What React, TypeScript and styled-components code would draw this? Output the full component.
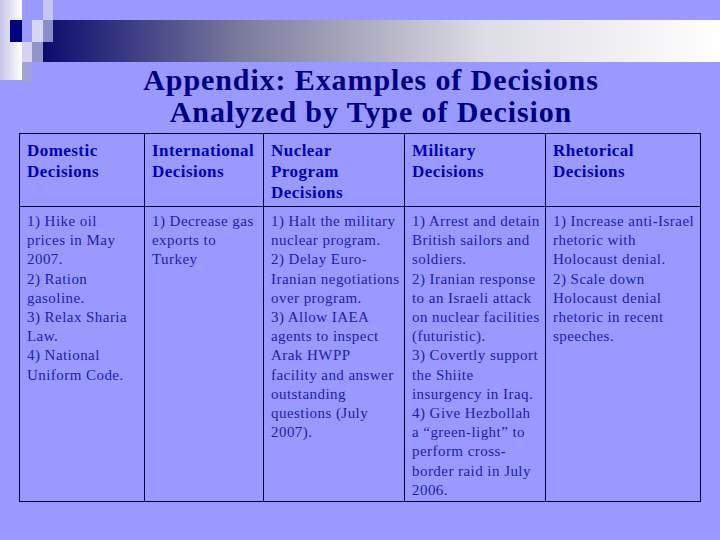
import styled, { createGlobalStyle } from "styled-components";

const GlobalStyle = createGlobalStyle`
  html, body {
    margin: 0;
    padding: 0;
    background: #9999ff;
  }
  body {
    font-family: "Liberation Serif", "Times New Roman", serif;
  }
`;

const Slide = styled.div`
  position: relative;
  width: 720px;
  height: 540px;
  overflow: hidden;
  background: #9999ff;
`;

const Band = styled.div`
  margin: 20px 0 0 43px;
  height: 42px;
  background: linear-gradient(
    to right,
    #0c0c6e 0%,
    #484888 16%,
    #7a7a9c 29%,
    #dcdce4 65%,
    #ffffff 100%
  );
`;

const Corner = styled.svg`
  position: absolute;
  left: 0;
  top: 0;
`;

const Title = styled.h1`
  margin: 2px 0 0 22px;
  font-size: 30px;
  line-height: 32px;
  letter-spacing: 0.9px;
  font-weight: bold;
  color: #000080;
  text-align: center;
`;

const Table = styled.table`
  margin: 5px 0 0 19px;
  border-collapse: collapse;
  table-layout: fixed;
  width: 681px;
`;

const HeadCell = styled.th<{ $w: number }>`
  width: ${(p) => p.$w}px;
  height: 72px;
  box-sizing: border-box;
  padding: 6px 2px 3px 7px;
  border: 1.5px solid #000033;
  vertical-align: top;
  text-align: left;
  font-size: 17px;
  line-height: 21px;
  letter-spacing: 0.45px;
  font-weight: bold;
  color: #0000c0;
`;

const BodyCell = styled.td`
  height: 295px;
  box-sizing: border-box;
  padding: 5px 0 0 7px;
  border: 1.5px solid #000033;
  vertical-align: top;
  font-size: 15px;
  line-height: 19.2px;
  letter-spacing: 0.45px;
  color: #2020b4;
`;

const Line = styled.div`
  white-space: nowrap;
`;

const columns = [
  {
    title: ["Domestic", "Decisions"],
    width: 125,
    lines: [
      "1) Hike oil",
      "prices in May",
      "2007.",
      "2) Ration",
      "gasoline.",
      "3) Relax Sharia",
      "Law.",
      "4) National",
      "Uniform Code.",
    ],
  },
  {
    title: ["International", "Decisions"],
    width: 119,
    lines: ["1) Decrease gas", "exports to", "Turkey"],
  },
  {
    title: ["Nuclear", "Program", "Decisions"],
    width: 141,
    lines: [
      "1) Halt the military",
      "nuclear program.",
      "2) Delay Euro-",
      "Iranian negotiations",
      "over program.",
      "3) Allow IAEA",
      "agents to inspect",
      "Arak HWPP",
      "facility and answer",
      "outstanding",
      "questions (July",
      "2007).",
    ],
  },
  {
    title: ["Military", "Decisions"],
    width: 141,
    lines: [
      "1) Arrest and detain",
      "British sailors and",
      "soldiers.",
      "2) Iranian response",
      "to an Israeli attack",
      "on nuclear facilities",
      "(futuristic).",
      "3) Covertly support",
      "the Shiite",
      "insurgency in Iraq.",
      "4) Give Hezbollah",
      "a \u201cgreen-light\u201d to",
      "perform cross-",
      "border raid in July",
      "2006.",
    ],
  },
  {
    title: ["Rhetorical", "Decisions"],
    width: 155,
    lines: [
      "1) Increase anti-Israel",
      "rhetoric with",
      "Holocaust denial.",
      "2) Scale down",
      "Holocaust denial",
      "rhetoric in recent",
      "speeches.",
    ],
  },
];

function CornerSquares() {
  return (
    <Corner width="56" height="84" viewBox="0 0 56 84">
      <defs>
        <linearGradient id="strip" x1="0" y1="0" x2="1" y2="0">
          <stop offset="0" stopColor="#c4c4e6" />
          <stop offset="1" stopColor="#ffffff" />
        </linearGradient>
      </defs>
      <rect x="0" y="0" width="22" height="80" fill="url(#strip)" />
      <rect x="10" y="20" width="12" height="22" fill="#000080" />
      <rect x="32" y="20" width="11" height="22" fill="#d6d6f0" />
      <rect x="43" y="0" width="10" height="20" fill="#c6c6f0" />
      <rect x="43" y="20" width="10" height="22" fill="#8c8cc8" />
      <rect x="22" y="42" width="10" height="20" fill="#d4d4f2" />
      <rect x="32" y="42" width="11" height="20" fill="#9494cc" />
      <rect x="22" y="62" width="10" height="20" fill="#a2a2da" />
    </Corner>
  );
}

function App() {
  return (
    <Slide>
      <GlobalStyle />
      <Band />
      <CornerSquares />
      <Title>
        Appendix: Examples of Decisions
        <br />
        Analyzed by Type of Decision
      </Title>
      <Table>
        <thead>
          <tr>
            {columns.map((c) => (
              <HeadCell key={c.title.join(" ")} $w={c.width}>
                {c.title.map((t) => (
                  <Line key={t}>{t}</Line>
                ))}
              </HeadCell>
            ))}
          </tr>
        </thead>
        <tbody>
          <tr>
            {columns.map((c) => (
              <BodyCell key={c.title.join(" ")}>
                {c.lines.map((l, i) => (
                  <Line key={i}>{l}</Line>
                ))}
              </BodyCell>
            ))}
          </tr>
        </tbody>
      </Table>
    </Slide>
  );
}

export default App;
